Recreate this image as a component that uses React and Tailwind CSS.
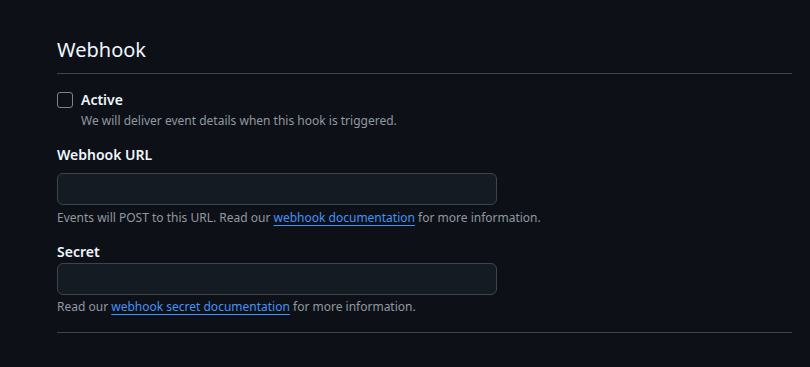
export default function App() {
  const font = { fontFamily: '"Noto Sans", "Open Sans", sans-serif' };
  return (
    <div className="min-h-[367px] w-full bg-[#0d1117] text-[#f0f6fc]" style={font}>
      <div className="pl-[57px] pr-[18px] pt-[35px]">
        <h2 className="border-b border-[#3d444d] pb-2 text-[20px] font-normal leading-[30px] text-[#f0f6fc]">
          Webhook
        </h2>

        <div className="mt-4 flex items-start gap-2">
          <div className="mt-[2px] h-4 w-4 shrink-0 rounded-[3px] border border-[#7d8590] bg-[#0d1117]" />
          <div>
            <div className="text-[14px] font-semibold leading-5">Active</div>
            <div className="mt-[2px] text-[12px] leading-[18px] text-[#9198a1]">
              We will deliver event details when this hook is triggered.
            </div>
          </div>
        </div>

        <div className="mt-[15px] text-[14px] font-semibold leading-5">Webhook URL</div>
        <div className="mt-2 h-8 w-[440px] rounded-md border border-[#3d444d] bg-[#151b23]" />
        <div className="mt-1 text-[12px] leading-[18px] text-[#9198a1]">
          Events will POST to this URL. Read our{" "}
          <a className="text-[#4493f8] underline underline-offset-[3px]" href="#">
            webhook documentation
          </a>{" "}
          for more information.
        </div>

        <div className="mt-[15px] text-[14px] font-semibold leading-5">Secret</div>
        <div className="mt-[1px] h-8 w-[440px] rounded-md border border-[#3d444d] bg-[#151b23]" />
        <div className="mt-[3px] text-[12px] leading-[18px] text-[#9198a1]">
          Read our{" "}
          <a className="text-[#4493f8] underline underline-offset-[3px]" href="#">
            webhook secret documentation
          </a>{" "}
          for more information.
        </div>

        <div className="mt-4 border-t border-[#3d444d]" />
      </div>
    </div>
  );
}
